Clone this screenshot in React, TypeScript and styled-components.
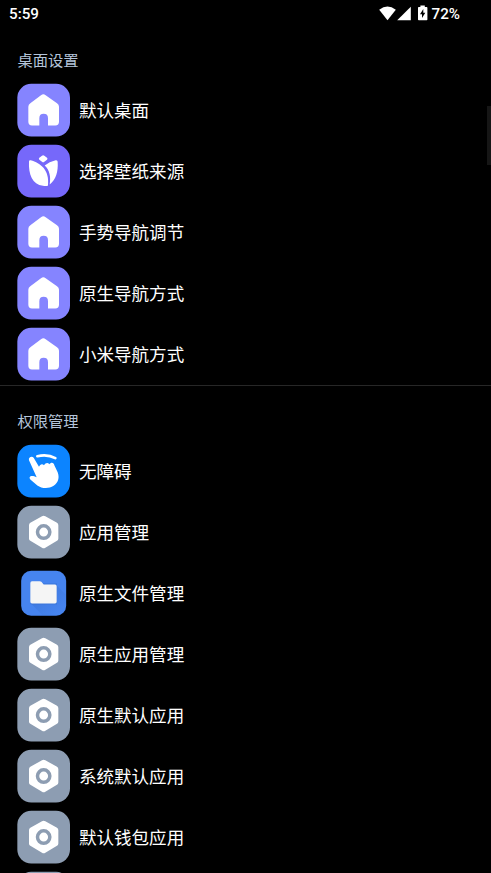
import React from "react";
import styled, { createGlobalStyle } from "styled-components";

const GlobalStyle = createGlobalStyle`
  * { box-sizing: border-box; }
  html, body { margin: 0; background: #000; overflow: hidden; }
`;

const Screen = styled.main`
  position: relative;
  width: 100%;
  height: 100vh;
  overflow: hidden;
  background: #000;
  color: #fff;
  font-family: Roboto, "Noto Sans CJK SC", sans-serif;
`;

const StatusBar = styled.header`
  display: flex;
  justify-content: space-between;
  align-items: center;
  height: 27px;
  padding: 0 31px 0 9px;
  font-size: 15.2px;
  font-weight: 500;
`;

const Clock = styled.span`
  padding-top: 1px;
`;

const StatusIcons = styled.div`
  display: flex;
  align-items: center;
`;

const StatusSvg = styled.svg`
  display: block;
  width: 53px;
  height: 18px;
`;

const Battery = styled.span`
  padding-top: 1px;
  font-size: 15.2px;
`;

const Section = styled.section<{ $divided?: boolean }>`
  border-bottom: ${(p) => (p.$divided ? "1px solid #272727" : "none")};
`;

const Heading = styled.h2<{ $height: number }>`
  display: flex;
  align-items: flex-end;
  height: ${(p) => p.$height}px;
  margin: 0;
  padding: 0 17.4px 6px;
  color: #b4c4da;
  font-size: 15.3px;
  font-weight: 400;
  line-height: 24px;
`;

const Row = styled.div`
  display: flex;
  align-items: center;
  gap: 8px;
  height: 61.1px;
  padding-left: 17px;
`;

const Icon = styled.svg`
  display: block;
  flex: none;
  width: 54px;
  height: 54px;
`;

const Label = styled.span`
  padding-top: 1.6px;
  font-size: 17.55px;
  line-height: 26px;
  white-space: nowrap;
`;

const ScrollThumb = styled.div`
  position: absolute;
  top: 106px;
  right: 0;
  width: 4px;
  height: 59px;
  background: #161616;
`;

type IconKind = "home" | "tulip" | "touch" | "hex" | "folder";

const tileColor: Record<IconKind, string> = {
  home: "#8584ff",
  tulip: "#7668fa",
  touch: "#0c84ff",
  hex: "#8d9db2",
  folder: "#4684ef",
};

const glyphs: Record<IconKind, React.ReactNode> = {
  home: (
    <path
      fill="#fff"
      d="M71 34Q78 28 85 34L119 58Q125 62 125 69V114Q125 125 114 125H92V103Q92 90 79 90T66 103V125H44Q33 125 33 114V69Q33 62 39 58Z"
    />
  ),
  tulip: (
    <g fill="#fff">
      <path d="M74 33Q77.500 30 81 33L89 39Q92 42 89 45L81 51Q77.500 54 74 51L66 45Q63 42 66 39Z" />
      <path d="M35 50Q35 45 40 46C70 54 97 76 92 121C91 124 84 124 77 123C45 119 33 88 35 50Z" />
      <path d="M82 62Q96 50 115 46Q121 45 121 51C123 81 116 105 97 119C101 96 97 76 82 62Z" />
    </g>
  ),
  touch: (
    <>
      <path fill="#fff" d="M35 46C32 38 44 32 49 39L65 66C68 58 75 56 80 61C85 53 92 53 96 58C102 50 110 53 111 61L121 82C127 98 123 113 109 123C93 133 73 131 60 122L39 104C32 94 43 90 58 97Z" />
      <path fill="none" stroke="#fff" strokeWidth="8" strokeLinecap="round" d="M60 34Q91 27 114 40" />
    </>
  ),
  hex: (
    <>
      <path fill="#fff" d="M74 31Q79 28 84 31L119 51Q123 53 123 58V98Q123 103 119 105L84 126Q79 129 74 126L39 105Q35 103 35 98V58Q35 53 39 51Z" />
      <circle cx="79" cy="78.500" r="18.500" fill="none" stroke="#8d9db2" strokeWidth="10.500" />
    </>
  ),
  folder: (
    <>
      <path fill="url(#folderShadow)" d="M118 56L146 84V120Q146 146 120 146H76L41 110Z" />
      <path fill="#356bc8" d="M40 49H119V113H40Z" opacity=".4" />
      <path fill="#f5f5f5" d="M44 43H67Q70 43 72 45L79 53H113Q118 53 118 58V105Q118 110 113 110H44Q39 110 39 105V49Q39 43 44 43Z" />
    </>
  ),
};

function AppIcon({ kind }: { kind: IconKind }) {
  const inset = kind === "folder" ? 11.5 : 0;
  return (
    <Icon viewBox="-1 -2.6 162 162" aria-hidden>
      <defs>
        <linearGradient id="folderShadow" x1="0.2" y1="0.2" x2="0.85" y2="0.85">
          <stop offset="0" stopColor="#3268c4" stopOpacity=".4" />
          <stop offset="1" stopColor="#3268c4" stopOpacity="0" />
        </linearGradient>
      </defs>
      <rect
        x={inset}
        y={inset}
        width={158 - inset * 2}
        height={158 - inset * 2}
        rx={inset ? 30 : 42}
        fill={tileColor[kind]}
      />
      {glyphs[kind]}
    </Icon>
  );
}

type Item = [IconKind, string];

const desktopItems: Item[] = [
  ["home", "默认桌面"],
  ["tulip", "选择壁纸来源"],
  ["home", "手势导航调节"],
  ["home", "原生导航方式"],
  ["home", "小米导航方式"],
];

const permissionItems: Item[] = [
  ["touch", "无障碍"],
  ["hex", "应用管理"],
  ["folder", "原生文件管理"],
  ["hex", "原生应用管理"],
  ["hex", "原生默认应用"],
  ["hex", "系统默认应用"],
  ["hex", "默认钱包应用"],
  ["hex", ""],
];

function Rows({ items }: { items: Item[] }) {
  return (
    <>
      {items.map(([kind, label], i) => (
        <Row key={i}>
          <AppIcon kind={kind} />
          <Label>{label}</Label>
        </Row>
      ))}
    </>
  );
}

export default function App() {
  return (
    <Screen>
      <GlobalStyle />
      <StatusBar>
        <Clock>5:59</Clock>
        <StatusIcons>
          <StatusSvg viewBox="0 0.5 53 18" fill="#fff" aria-hidden>
            <path d="M0.200 5.300Q8.500-1.300 16.800 5.300L8.500 15.800Z" />
            <path d="M31.800 2.200V15.700H18.200Z" />
            <path
              fillRule="evenodd"
              d="M41.400 1H45.800V2.500H47.600Q48.400 2.500 48.400 3.200V15Q48.400 15.800 47.600 15.800H39.800Q39 15.800 39 15V3.200Q39 2.500 39.800 2.500H41.400ZM44.300 4.500L41 9.700H43V13.500L46.300 8.300H44.300Z"
            />
          </StatusSvg>
          <Battery>72%</Battery>
        </StatusIcons>
      </StatusBar>
      <Section $divided>
        <Heading $height={52.200}>桌面设置</Heading>
        <Rows items={desktopItems} />
      </Section>
      <Section>
        <Heading $height={54.600}>权限管理</Heading>
        <Rows items={permissionItems} />
      </Section>
      <ScrollThumb />
    </Screen>
  );
}
